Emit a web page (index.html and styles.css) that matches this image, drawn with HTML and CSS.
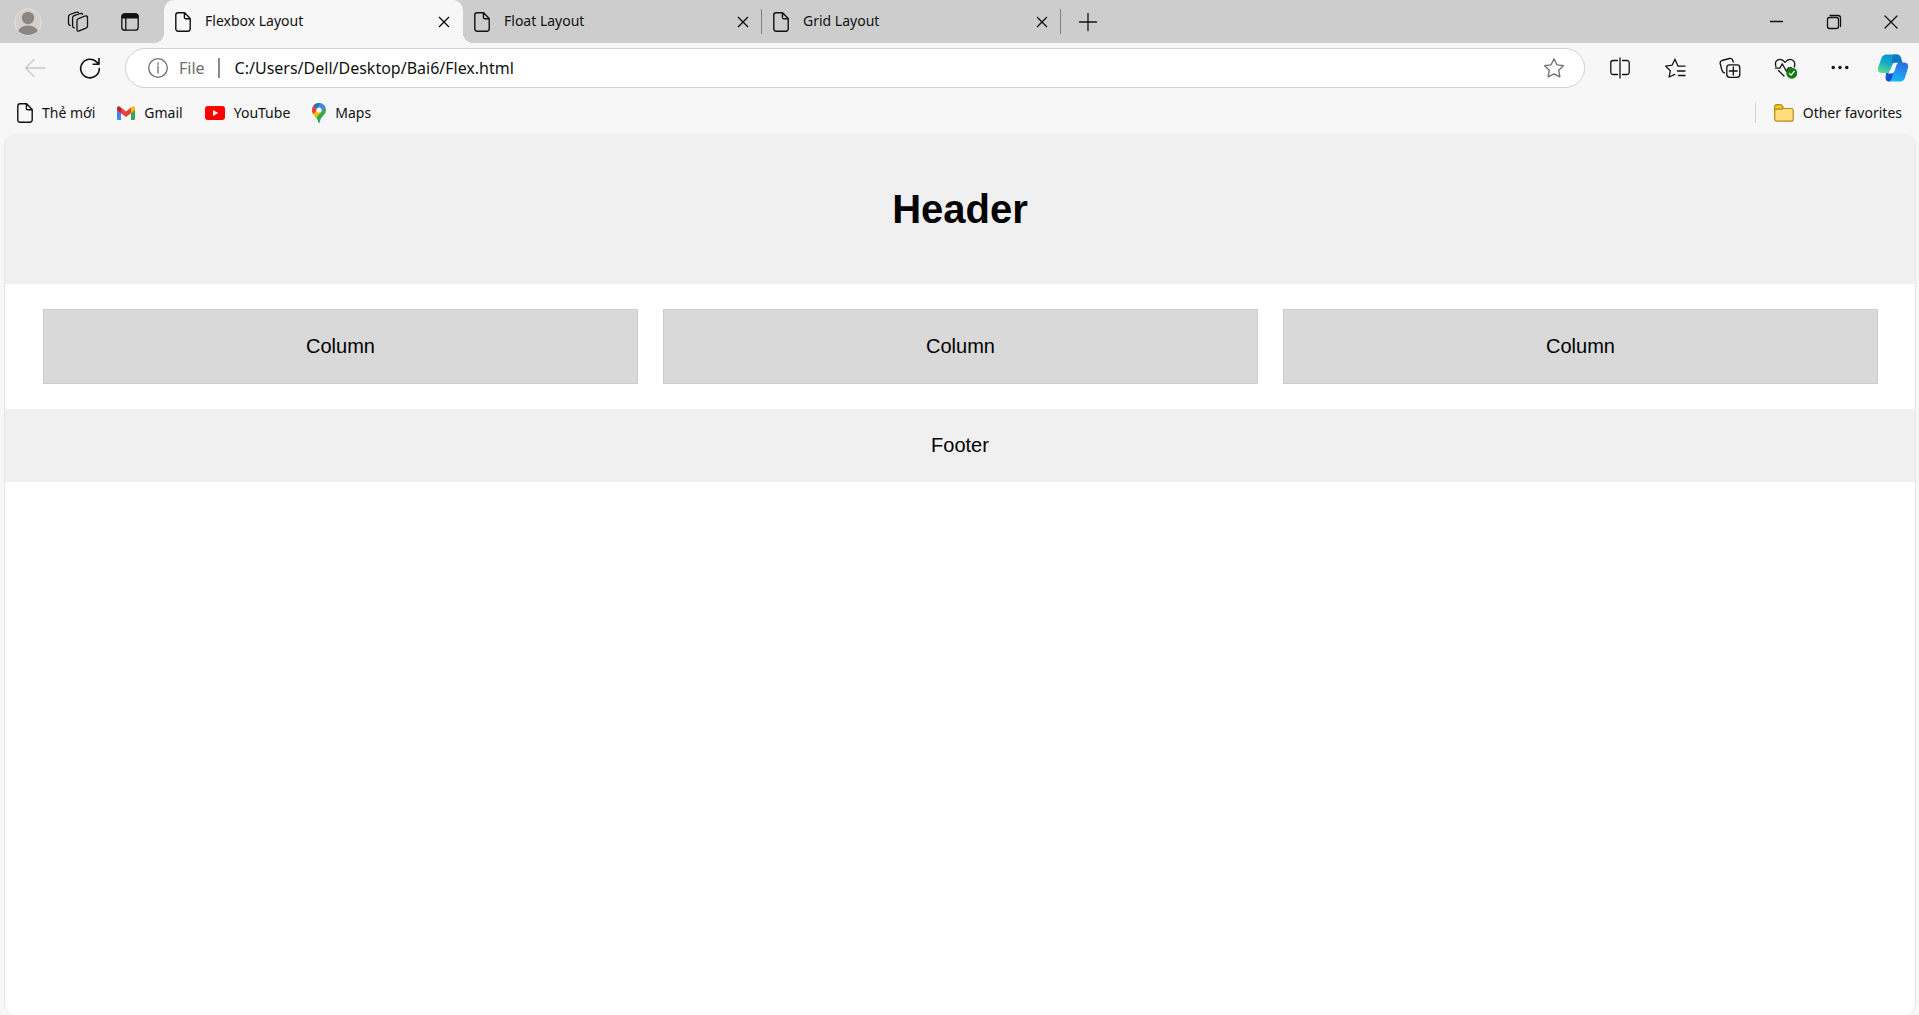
FILE: index.html
```html
<!DOCTYPE html>
<html lang="vi">
<head>
<meta charset="utf-8">
<title>Flexbox Layout</title>
<link rel="stylesheet" href="styles.css">
</head>
<body>
<svg class="defs" aria-hidden="true">
  <symbol id="doc" viewBox="0 0 16 20"><path d="M3 .8h6.6L15.2 6.6V17a2.2 2.2 0 0 1-2.2 2.2H3A2.2 2.2 0 0 1 .8 17V3A2.2 2.2 0 0 1 3 .8zM9.4 1v4.2a1.6 1.6 0 0 0 1.6 1.6h4"/></symbol>
  <symbol id="cross" viewBox="0 0 12 12"><path d="M1 1l10 10M11 1L1 11"/></symbol>
</svg>

<header class="tabstrip">
  <div class="tools">
    <button class="tool" aria-label="Profile"><svg class="avatar" viewBox="0 0 28 28"><defs><clipPath id="face"><circle cx="14" cy="14" r="13"/></clipPath></defs><circle cx="14" cy="14" r="13.3" fill="#d4d1cc" stroke="#e3e0da" stroke-width="1"/><g clip-path="url(#face)" fill="#8b8683"><circle cx="14" cy="10" r="6.2"/><ellipse cx="14" cy="25" rx="10.5" ry="7.5"/></g></svg></button>
    <button class="tool" aria-label="Workspaces"><svg class="icon" viewBox="0 0 24 24"><path d="M12.500 8.600l6.600-2.600q2.400-.6 2.400 1.600v8.400q0 1.600-1.500 2.200l-6.800 2.700q-2.200.7-2.200-1.500v-8.600q0-1.700 1.500-2.200zM8.200 17.800q-1.600-.3-1.600-1.800V8q0-1.700 1.500-2.300L14.500 3.500q1.700-.4 2.100.8M4.200 15.500Q2.500 15.300 2.500 13.500V6.800q0-1.700 1.500-2.300L10.500 2.200q1.500-.4 2 .5"/></svg></button>
    <button class="tool" aria-label="Tab actions"><svg class="icon" viewBox="0 0 24 24"><rect x="3.800" y="3.800" width="16.400" height="16.400" rx="3"/><path d="M7.800 8v12"/><path fill="#111" stroke="none" d="M3.500 8.500V6.500A3.300 3.300 0 0 1 6.800 3.200h10.400a3.300 3.300 0 0 1 3.300 3.300v2z"/></svg></button>
  </div>
  <nav class="tabs">
    <div class="tab active"><svg class="doc"><use href="#doc"/></svg><span class="title">Flexbox Layout</span><button class="close" aria-label="Close tab"><svg class="cross"><use href="#cross"/></svg></button></div>
    <div class="tab"><svg class="doc"><use href="#doc"/></svg><span class="title">Float Layout</span><button class="close" aria-label="Close tab"><svg class="cross"><use href="#cross"/></svg></button></div>
    <div class="tab"><svg class="doc"><use href="#doc"/></svg><span class="title">Grid Layout</span><button class="close" aria-label="Close tab"><svg class="cross"><use href="#cross"/></svg></button></div>
    <button class="new-tab" aria-label="New tab"><svg class="icon" viewBox="0 0 24 24"><path d="M12 3.500v17M3.500 12h17"/></svg></button>
  </nav>
  <div class="window-controls">
    <button aria-label="Minimize"><svg class="icon" viewBox="0 0 24 24"><path d="M5.500 11.500h12"/></svg></button>
    <button aria-label="Restore"><svg class="icon" viewBox="0 0 24 24"><rect x="5.500" y="7.500" width="11" height="11" rx="2"/><path d="M8 5.500h8a2.500 2.500 0 0 1 2.500 2.500v8.500"/></svg></button>
    <button aria-label="Close"><svg class="icon" viewBox="0 0 24 24"><path d="M6 6l12 12M18 6L6 18"/></svg></button>
  </div>
</header>

<div class="toolbar">
  <button class="nav disabled" aria-label="Back"><svg class="icon" viewBox="0 0 24 24"><path d="M22 12H2.500M11 3.500L2.500 12l8.500 8.500"/></svg></button>
  <button class="nav" aria-label="Refresh"><svg class="icon bold" viewBox="0 0 24 24"><path d="M21.300 12.500A9.300 9.300 0 1 1 18.800 6.200L21 8.200M21 2.500v5.800h-5.800"/></svg></button>
  <form class="address">
    <svg class="icon info" viewBox="0 0 24 24"><circle cx="12" cy="12" r="9.300"/><path d="M12 10.500v6.500M12 7v1.800"/></svg>
    <label for="url">File</label>
    <input id="url" type="text" value="C:/Users/Dell/Desktop/Bai6/Flex.html">
    <button type="button" class="star" aria-label="Add to favorites"><svg class="icon" viewBox="0 0 24 24"><path d="M12 2.800l2.900 6 6.500.9-4.700 4.600 1.200 6.600-5.900-3.100-5.900 3.100 1.200-6.600L2.600 9.700l6.500-.9z"/></svg></button>
  </form>
  <button class="nav" aria-label="Split screen"><svg class="icon" viewBox="0 0 24 24"><path d="M12 2v20M9.500 4.500H5A2.200 2.200 0 0 0 2.800 6.700v9.600A2.200 2.200 0 0 0 5 18.500h4.500M14.500 4.500H19a2.200 2.200 0 0 1 2.200 2.200v9.600a2.200 2.200 0 0 1-2.200 2.200h-4.500"/></svg></button>
  <button class="nav" aria-label="Favorites"><svg class="icon" viewBox="0 0 24 24"><path d="M22 10.200h-7l-3-7-2.900 6-6.500.9 4.700 4.600-1.200 6.300 5.700-2.600M14.500 15h7.500M15.500 19.500h6.500"/></svg></button>
  <button class="nav" aria-label="Collections"><svg class="icon" viewBox="0 0 24 24"><rect x="8.800" y="8.800" width="13" height="12.500" rx="2.800"/><path d="M15.300 11v8M11.300 15h8M6.500 16.800Q4.500 16.300 4 14.500L2.200 7.500Q1.700 5.200 4 4.500L11.500 2.500Q14 2 14.700 4.200L15.200 6"/></svg></button>
  <button class="nav" aria-label="Browser essentials"><svg class="icon" viewBox="0 0 24 24"><path d="M3 10.500C1.200 6 4.200 3.300 7 3.300c2.200 0 3.800 1.400 5 3 1.200-1.600 2.800-3 5-3 3.500 0 6 3.500 4.200 7.700M2.500 12.200h4.300l2.400-4.400 4.200 7.400 2-3.400h3M5.500 14.500l5.500 5.500"/><circle cx="18.800" cy="17.200" r="5.500" fill="#107c10" stroke="none"/><path stroke="#fff" d="M16.500 17.500l1.600 1.600 3-3.600"/></svg></button>
  <button class="nav" aria-label="Settings and more"><svg class="icon" viewBox="0 0 24 24"><g fill="#111" stroke="none"><circle cx="5.200" cy="11.500" r="1.700"/><circle cx="12" cy="11.500" r="1.700"/><circle cx="18.800" cy="11.500" r="1.700"/></g></svg></button>
  <button class="nav copilot" aria-label="Copilot"><svg viewBox="0 0 32 28"><defs>
    <linearGradient id="teal" x1=".6" y1="0" x2=".2" y2="1"><stop offset="0" stop-color="#0b8fd8"/><stop offset=".45" stop-color="#12a9c8"/><stop offset="1" stop-color="#62e08e"/></linearGradient>
    <linearGradient id="blue" x1=".7" y1="0" x2=".4" y2="1"><stop offset="0" stop-color="#2b6be0"/><stop offset="1" stop-color="#19b5fb"/></linearGradient>
    <linearGradient id="deep" x1="0" y1="0" x2="1" y2="1"><stop offset="0" stop-color="#0e5fd0"/><stop offset="1" stop-color="#1a3fd8"/></linearGradient></defs>
    <path fill="url(#blue)" d="M20 8.500h7.500q4.500.5 3.500 5.500l-3 9.500q-1.200 4-5 4H11.500L14 19z"/>
    <path fill="url(#deep)" d="M9 18.500h7.500L15 23.500q-1.200 4-3.500 4-2.300 0-3-3.500z"/>
    <path fill="url(#teal)" d="M9.500.5H21L14 14.500q-1.500 4.500-5 4.500H5q-5 0-4-5.500L4.500 4Q5.800.5 9.500.5z"/>
    <path fill="#0a78c4" d="M16.500.5H20q3 0 4 3l1.500 5.500h-8.500q-2.500.5-2-3z"/>
    <path fill="#fff" d="M18 8.700h3.500q-1.600.8-2.200 2.800l-1.800 5.500q-.8 2.400-3.200 2.400h-3.500q2-.6 2.700-2.900l1.700-5.200q.8-2.400 2.800-2.600z"/></svg></button>
</div>

<nav class="bookmarks">
  <a href="#"><svg class="doc"><use href="#doc"/></svg>Thẻ mới</a>
  <a href="#"><svg class="gmail" viewBox="0 0 18 14"><path fill="#4285f4" d="M0 2.500l4 3V14H1.300A1.300 1.300 0 0 1 0 12.700z"/><path fill="#34a853" d="M18 2.500l-4 3V14h2.700a1.300 1.300 0 0 0 1.300-1.300z"/><path fill="#fbbc04" d="M14 1.500l1.400-1Q18-.6 18 2.400V4l-4 3.200z"/><path fill="#ea4335" d="M4 1.500l5 3.900 5-3.900v5.700l-5 3.900-5-3.900z"/><path fill="#c5221f" d="M4 7.200L0 4V2.400Q0-.6 2.600.5L4 1.500z"/></svg>Gmail</a>
  <a href="#"><svg class="youtube" viewBox="0 0 20 14"><rect width="20" height="14" rx="3" fill="#f00"/><path fill="#fff" d="M8 4l5.200 3L8 10z"/></svg>YouTube</a>
  <a href="#"><svg class="maps" viewBox="0 0 14 20"><defs><clipPath id="pin"><path d="M7 0a7 7 0 0 1 7 7c0 5-5.500 6.500-6.200 12.200q-.8 1.600-1.600 0C5.500 13.500 0 12 0 7a7 7 0 0 1 7-7z"/></clipPath></defs><g clip-path="url(#pin)"><path fill="#34a853" d="M0 0h14v20H0z"/><path fill="#fbbc04" d="M0 14L0 10 7 3l4 4-8 9z"/><path fill="#ea4335" d="M0 0h3l4 5-6.500 7H0z"/><path fill="#1a73e8" d="M1.500 2L3 0h5L5 6z"/><path fill="#4285f4" d="M7 0h7v3.500L9 9 5 6 9.500.4z"/></g><circle cx="7" cy="7" r="2.600" fill="#fff"/></svg>Maps</a>
  <a href="#" class="other"><svg class="folder" viewBox="0 0 20 18"><path d="M.7 4.500h16.500a2 2 0 0 1 2 2v8.700a2 2 0 0 1-2 2H2.700a2 2 0 0 1-2-2z" fill="#ffdc7c" stroke="#b88a10" stroke-width="1.200"/><path d="M.7 5.200V2.700a2 2 0 0 1 2-2h3.600q1 0 1.500.7l1.200 1.400q-.4 2.400-2.400 2.400z" fill="#f5c52c" stroke="#b88a10" stroke-width="1.200"/></svg>Other favorites</a>
</nav>

<main class="page">
  <header class="page-header"><h1>Header</h1></header>
  <section class="columns">
    <div class="column">Column</div>
    <div class="column">Column</div>
    <div class="column">Column</div>
  </section>
  <footer class="page-footer">Footer</footer>
</main>
</body>
</html>
```
FILE: styles.css
```css
* { box-sizing: border-box; }

body {
  margin: 0;
  min-height: 100vh;
  display: flex;
  flex-direction: column;
  background: #f7f7f7;
  color: #111;
  font: 14px/20px "Noto Sans", "Open Sans", sans-serif;
}

button {
  display: flex;
  align-items: center;
  justify-content: center;
  padding: 0;
  border: 0;
  background: none;
  color: inherit;
}

svg {
  display: block;
  flex: none;
  fill: none;
}

.defs { position: absolute; width: 0; height: 0; }

.icon {
  width: 24px;
  height: 24px;
  stroke: #111;
  stroke-width: 1.3;
  stroke-linecap: round;
  stroke-linejoin: round;
}
.icon.bold { stroke-width: 1.6; }

.doc { width: 16px; height: 20px; stroke: #111; stroke-width: 1.4; }
.cross { width: 12px; height: 12px; stroke: #111; stroke-width: 1.4; }

/* Tab strip */
.tabstrip {
  display: flex;
  height: 43px;
  background: #cdcdcd;
}
.tools { display: flex; gap: 12px; padding: 0 14px 0 8px; }
.tool { width: 40px; }
.tool:first-child { margin-right: -2px; }
.avatar { width: 28px; height: 28px; }

.tabs { display: flex; flex: 1; }
.tab {
  position: relative;
  display: flex;
  align-items: center;
  gap: 14px;
  width: 299px;
  padding: 0 9px 0 11px;
}
.title { flex: 1; padding-bottom: 2px; }
.close { width: 20px; height: 20px; }
.tab.active { background: #f7f7f7; border-radius: 10px 10px 0 0; }
.tab.active::before,
.tab.active::after {
  content: "";
  position: absolute;
  bottom: 0;
  width: 10px;
  height: 10px;
}
.tab.active::before {
  right: 100%;
  background: radial-gradient(circle at 0 0, transparent 10px, #f7f7f7 10px);
}
.tab.active::after {
  left: 100%;
  background: radial-gradient(circle at 100% 0, transparent 10px, #f7f7f7 10px);
}
.tab:not(.active)::after {
  content: "";
  position: absolute;
  top: 9px;
  right: 0;
  width: 1px;
  height: 25px;
  background: #808080;
}
.new-tab { width: 54px; }

.window-controls { display: flex; }
.window-controls button { width: 57px; }

/* Toolbar */
.toolbar {
  display: flex;
  align-items: center;
  gap: 15px;
  height: 50px;
  padding: 0 8px 0 15px;
}
.nav { width: 40px; height: 40px; }
.disabled .icon { stroke: #c8c8c8; }
.copilot { width: 36px; }
.copilot svg { width: 32px; height: 28px; }

.address {
  display: flex;
  align-items: center;
  flex: 1;
  height: 40px;
  padding: 0 12px 0 20px;
  border: 1px solid #cfcfcf;
  border-radius: 20px;
  background: #fff;
  font-size: 16px;
}
.address label {
  margin-left: 9px;
  padding-right: 13px;
  border-right: 2px solid #8a8a8a;
  color: #6e6e6e;
}
.address input {
  flex: 1;
  min-width: 0;
  padding: 0 0 0 15px;
  border: 0;
  outline: 0;
  background: none;
  color: #111;
  font: inherit;
}
.info, .star .icon { stroke: #6e6e6e; }
.star { width: 36px; height: 36px; }

/* Bookmarks */
.bookmarks {
  display: flex;
  align-items: center;
  gap: 22px;
  height: 41px;
  padding: 0 17px 2px;
}
.bookmarks a {
  display: flex;
  align-items: center;
  gap: 9px;
  color: #111;
  text-decoration: none;
}
.gmail { width: 18px; height: 14px; }
.youtube { width: 20px; height: 14px; }
.maps { width: 14px; height: 20px; }
.folder { width: 20px; height: 18px; }
.bookmarks .other {
  margin-left: auto;
  padding-left: 18px;
  border-left: 1px solid #cfcfcf;
}

/* Page content */
.page {
  flex: 1;
  margin: 0 3px 0 4px;
  border: solid #e6e6e6;
  border-width: 0 1px;
  border-radius: 12px;
  overflow: hidden;
  background: #fff;
  color: #000;
  font: 20px/23px "Liberation Sans", Arial, sans-serif;
  text-align: center;
}
.page-header { padding: 52px 25px; background: #f0f0f0; }
.page-header h1 { margin: 0; font-size: 40px; line-height: 46px; }
.columns { display: flex; gap: 25px; padding: 25px 37px 25px 38px; }
.column {
  flex: 1;
  padding: 25px;
  border: 1px solid #ccc;
  background: #d9d9d9;
}
.page-footer { padding: 25px; background: #f0f0f0; }
```
